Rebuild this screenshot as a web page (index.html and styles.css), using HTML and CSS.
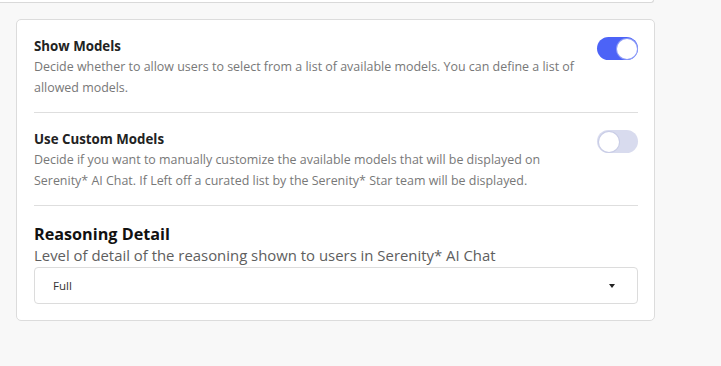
FILE: index.html
```html
<!DOCTYPE html>
<html>
<head>
<meta charset="utf-8">
<link rel="stylesheet" href="styles.css">
</head>
<body>
<div class="top-card"></div>
<div class="card">
  <div class="row">
    <div class="text">
      <div class="title">Show Models</div>
      <div class="desc">Decide whether to allow users to select from a list of available models. You can define a list of allowed models.</div>
    </div>
    <div class="toggle on"><span class="knob"></span></div>
  </div>
  <div class="row">
    <div class="text">
      <div class="title">Use Custom Models</div>
      <div class="desc">Decide if you want to manually customize the available models that will be displayed on Serenity* AI Chat. If Left off a curated list by the Serenity* Star team will be displayed.</div>
    </div>
    <div class="toggle off"><span class="knob"></span></div>
  </div>
  <div class="section">
    <div class="section-title">Reasoning Detail</div>
    <div class="section-desc">Level of detail of the reasoning shown to users in Serenity* AI Chat</div>
    <div class="select">
      <span class="value">Full</span>
      <span class="caret"></span>
    </div>
  </div>
</div>
</body>
</html>
```
FILE: styles.css
```css
* { box-sizing: border-box; }
body {
  margin: 0;
  background: #f8f8f8;
  font-family: "Open Sans", Roboto, "Liberation Sans", sans-serif;
  width: 721px;
  height: 366px;
  overflow: hidden;
}
.top-card {
  width: 654px;
  height: 3px;
  background: #fff;
  border-bottom: 1px solid #d9d9d9;
  border-right: 1px solid #d9d9d9;
  border-bottom-right-radius: 4px;
}
.card {
  margin: 16px 0 0 16px;
  width: 639px;
  background: #fff;
  border: 1px solid #dcdcdc;
  border-radius: 5px;
  padding: 0 16px 16px 17px;
}
.row {
  display: flex;
  justify-content: space-between;
  align-items: flex-start;
  padding: 16px 0 14px;
  border-bottom: 1px solid #dedede;
}
.text { width: 550px; }
.title {
  font-size: 13.3px;
  line-height: 20px;
  font-weight: 700;
  color: #222;
}
.desc {
  font-size: 12.45px;
  line-height: 21px;
  color: #787878;
}
.toggle {
  width: 41px;
  height: 23px;
  border-radius: 12px;
  position: relative;
  flex: none;
  margin-top: 1px;
}
.toggle.on { background: #4c63f7; }
.toggle.off { background: #d8dbee; }
.knob {
  position: absolute;
  top: 1.5px;
  width: 20px;
  height: 20px;
  border-radius: 50%;
  background: #fff;
}
.toggle.on .knob { right: 1.5px; box-shadow: 0 0 0 1px #8d9cf7; }
.toggle.off .knob { left: 1.5px; box-shadow: 0 0 0 1px #c9cde6; }
.section { padding-top: 17px; }
.section-title {
  font-size: 16.2px;
  line-height: 22px;
  font-weight: 700;
  color: #111;
}
.section-desc {
  font-size: 14.9px;
  line-height: 20px;
  color: #5e5e5e;
}
.select {
  margin-top: 2px;
  height: 37px;
  border: 1px solid #dcdcdc;
  border-radius: 4px;
  display: flex;
  align-items: center;
  justify-content: space-between;
  padding: 0 22px 0 18px;
}
.value {
  font-size: 11.5px;
  color: #333;
}
.caret {
  width: 0;
  height: 0;
  border-left: 3.5px solid transparent;
  border-right: 3.5px solid transparent;
  border-top: 4px solid #222;
}
```
